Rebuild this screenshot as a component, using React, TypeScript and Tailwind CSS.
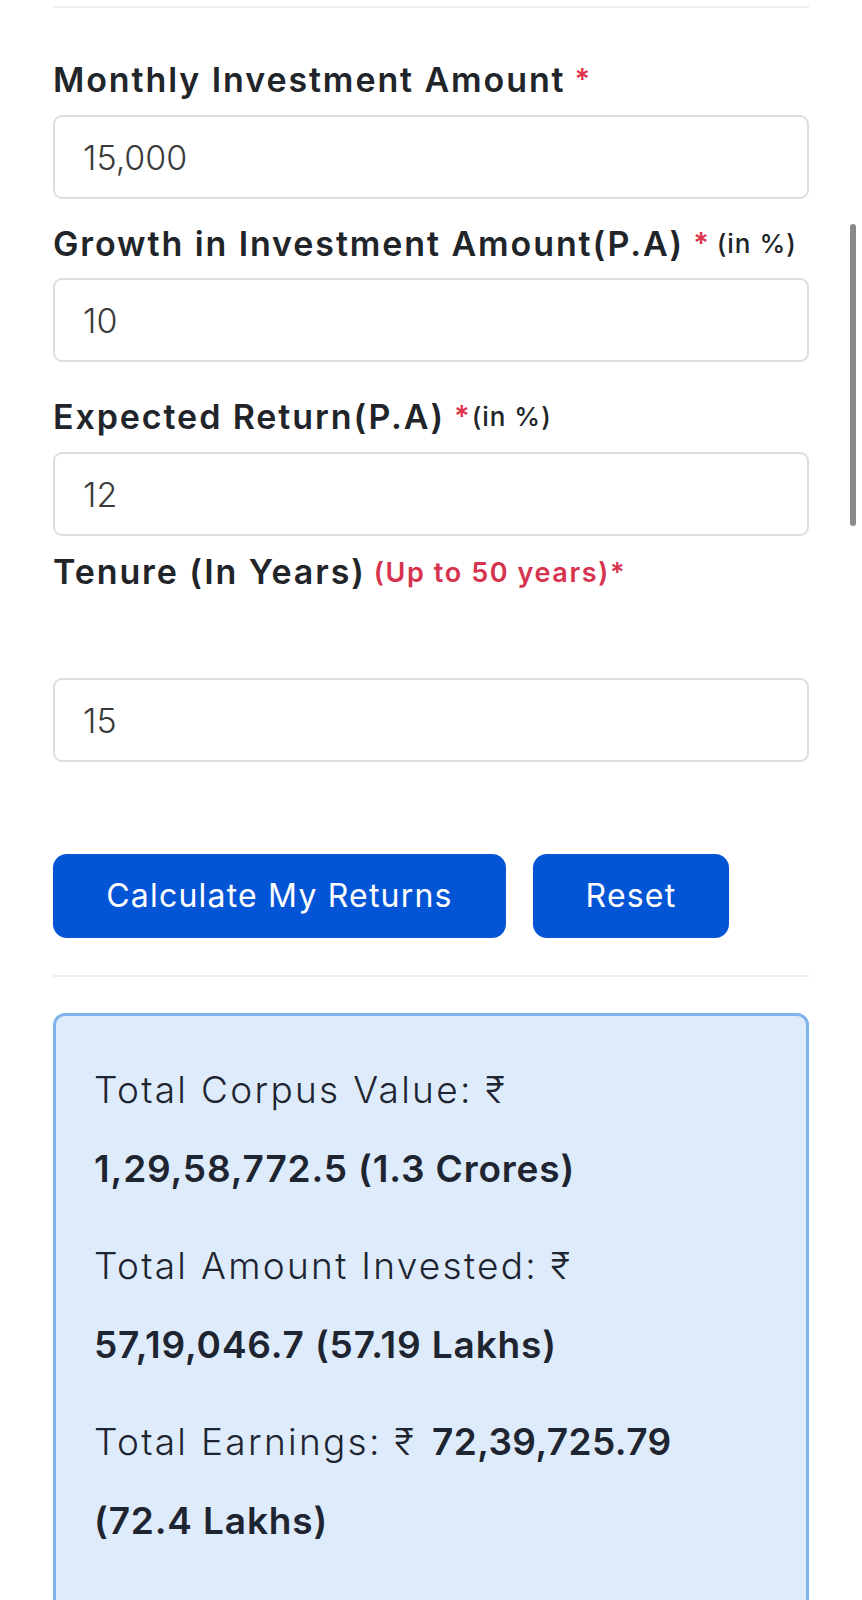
import React from 'react';

const font = { fontFamily: 'Inter, "Open Sans", sans-serif' };

function Field({ value, className = '' }: { value: string; className?: string }) {
  return (
    <div
      className={`flex h-[84px] items-center rounded-[9px] border-2 border-[#dadde1] bg-white pl-[28px] text-[34px] font-light text-[#3a3a3a] ${className}`}
    >
      {value}
    </div>
  );
}

const label =
  'flex h-[48px] items-center whitespace-nowrap text-[34px] font-semibold tracking-[1.9px] text-[#212529]';

export default function App() {
  return (
    <div className="relative h-[1600px] w-full overflow-hidden bg-white" style={font}>
      {/* scrollbar thumb */}
      <div className="absolute left-[850px] top-[224px] h-[302px] w-[6px] rounded-full bg-[#8a8a8a]" />

      <div className="ml-[53px] w-[756px] pt-[6px]">
        <div className="h-[2px] w-full bg-[#ebedef]" />

        {/* Monthly investment */}
        <div className={`mt-[47px] ${label}`}>
          Monthly Investment Amount
          <span className="ml-[9px] text-[29px] text-[#e0334c]">*</span>
        </div>
        <Field value="15,000" className="mt-[12px]" />

        {/* Growth */}
        <div className={`mt-[20px] ${label}`}>
          Growth in Investment Amount(P.A)
          <span className="ml-[9px] text-[29px] text-[#e0334c]">*</span>
          <span className="ml-[6px] text-[26px] font-medium tracking-[1px]">(in %)</span>
        </div>
        <Field value="10" className="mt-[11px]" />

        {/* Expected return */}
        <div className={`mt-[30px] ${label}`}>
          Expected Return(P.A)
          <span className="ml-[9px] text-[29px] text-[#e0334c]">*</span>
          <span className="text-[26px] font-medium tracking-[1px]">(in %)</span>
        </div>
        <Field value="12" className="mt-[12px]" />

        {/* Tenure */}
        <div className={`mt-[11px] ${label}`}>
          Tenure (In Years)
          <span className="ml-[8px] pt-[4px] text-[27px] font-semibold tracking-[1.6px] text-[#d6334f]">
            (Up to 50 years)*
          </span>
        </div>
        <Field value="15" className="mt-[83px]" />

        {/* Actions */}
        <div className="mt-[92px] flex gap-[27px]">
          <button className="h-[84px] w-[453px] rounded-[14px] bg-[#0455d6] text-[32px] font-normal tracking-[1.2px] text-white">
            Calculate My Returns
          </button>
          <button className="h-[84px] w-[196px] rounded-[14px] bg-[#0455d6] text-[32px] font-normal tracking-[1.2px] text-white">
            Reset
          </button>
        </div>

        <div className="mt-[37px] h-[2px] w-full bg-[#ebedef]" />

        {/* Results */}
        <div className="mt-[36px] h-[700px] rounded-[12px] border-[3px] border-[#80b3e9] bg-[#ddebfb] px-[38px] pt-[34px] text-[37px] leading-[79px] text-[#1e2530]">
          <p className="mb-[18px] whitespace-nowrap">
            <span className="font-light tracking-[2.3px]">Total Corpus Value: ₹</span>
            <br />
            <span className="font-semibold tracking-[0.85px]">1,29,58,772.5 (1.3 Crores)</span>
          </p>
          <p className="mb-[18px] whitespace-nowrap">
            <span className="font-light tracking-[2.3px]">Total Amount Invested: ₹</span>
            <br />
            <span className="font-semibold tracking-[0.85px]">57,19,046.7 (57.19 Lakhs)</span>
          </p>
          <p className="whitespace-nowrap">
            <span className="font-light tracking-[2.3px]">Total Earnings: ₹</span>
            <span className="ml-[16px] font-semibold tracking-[0.4px]">72,39,725.79</span>
            <br />
            <span className="font-semibold tracking-[0.85px]">(72.4 Lakhs)</span>
          </p>
        </div>
      </div>
    </div>
  );
}
